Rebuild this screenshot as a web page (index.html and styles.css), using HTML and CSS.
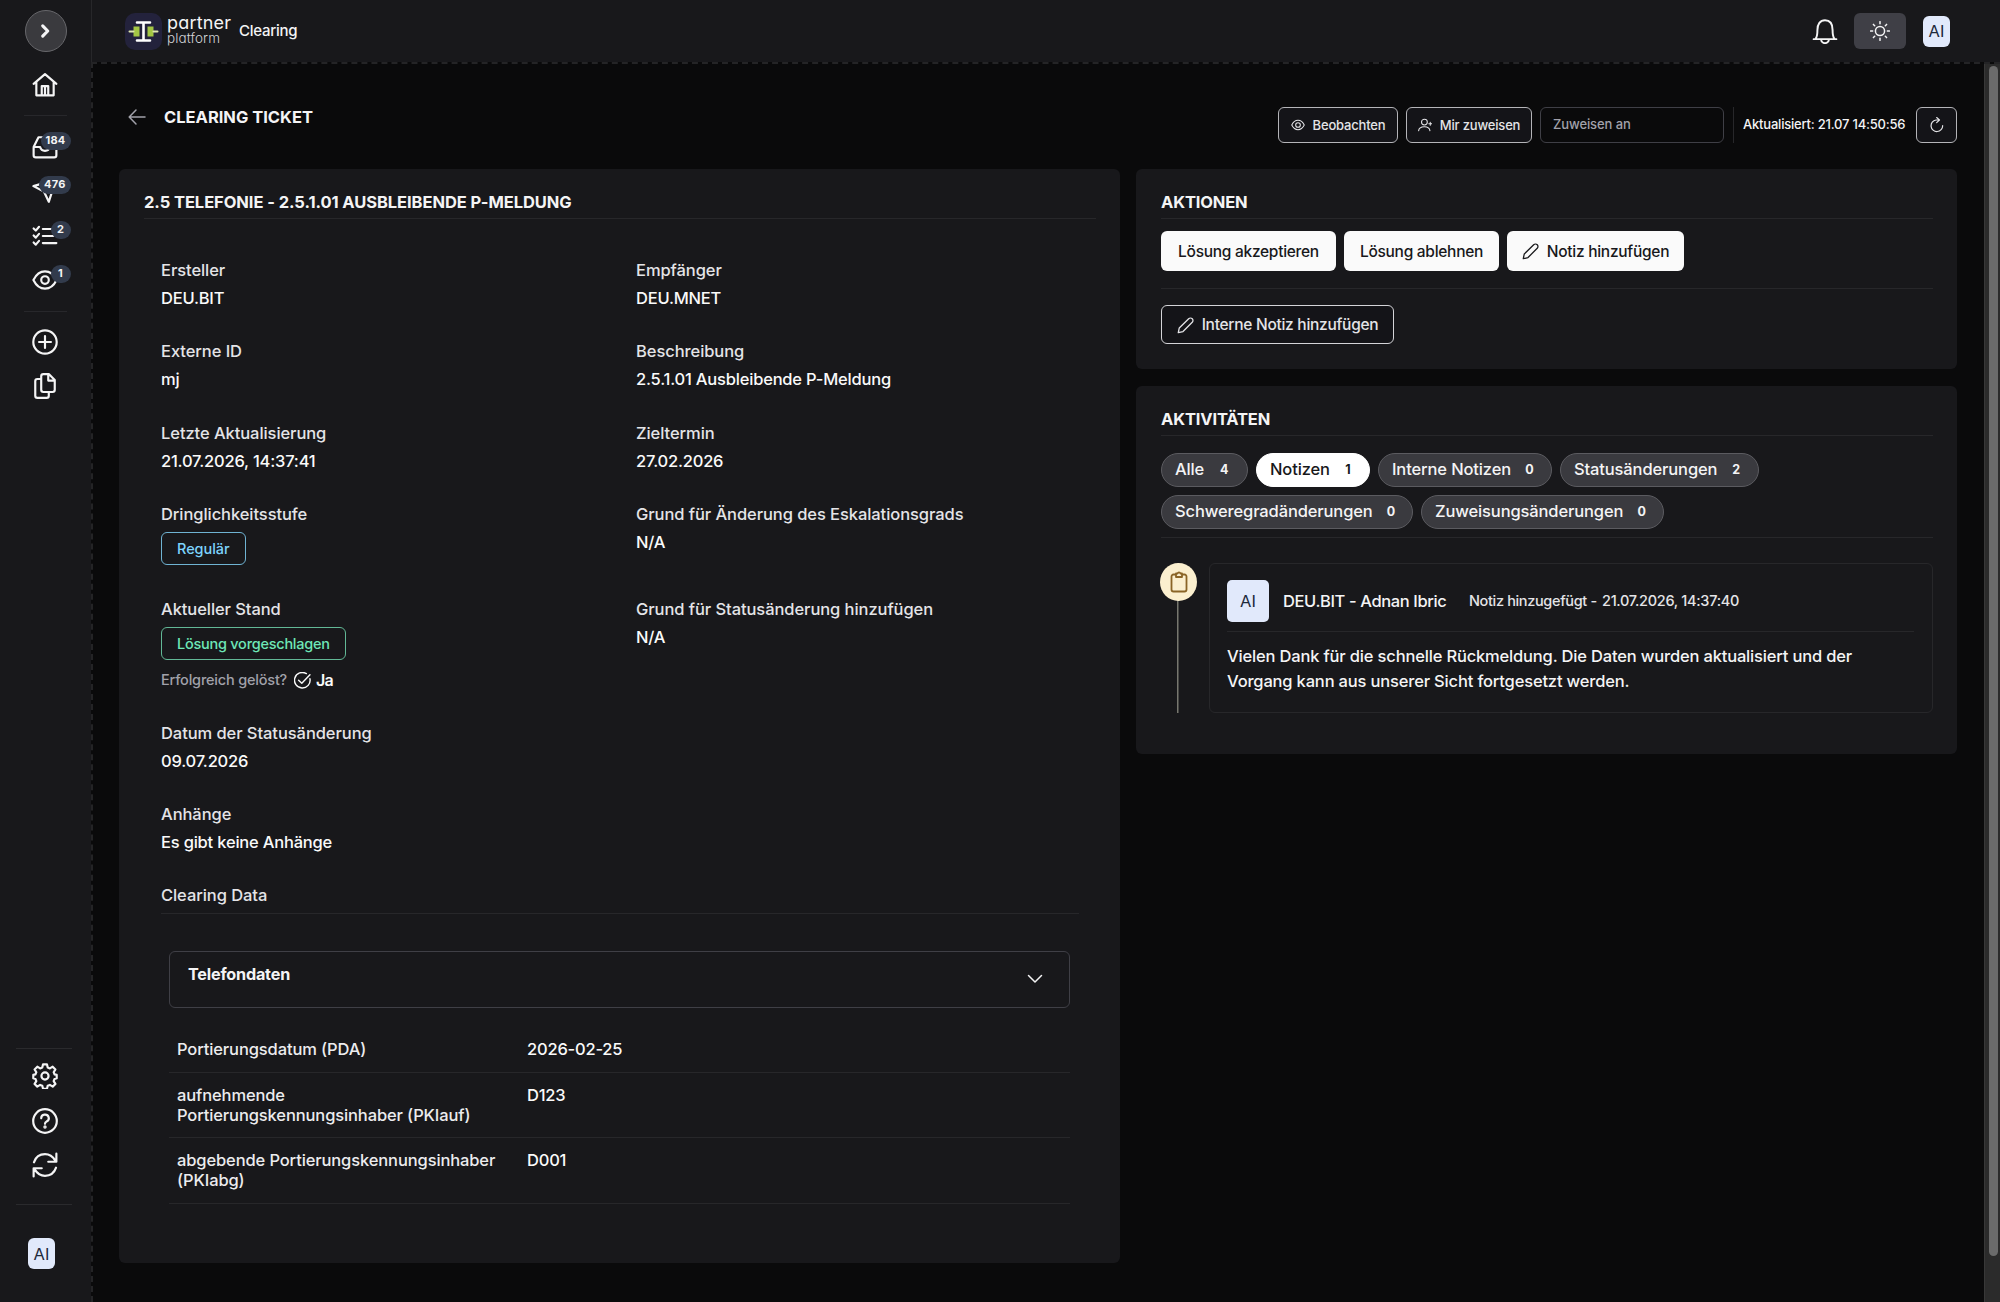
FILE: index.html
```html
<!DOCTYPE html>
<html lang="de">
<head>
<meta charset="utf-8">
<title>Clearing Ticket</title>
<link rel="stylesheet" href="styles.css">
</head>
<body>
<div class="app">
  <aside class="sidebar">
    <button class="toggle"><svg width="22" height="22" viewBox="0 0 24 24" class="heavy"><path d="M9.500 6.500 15 12l-5.500 5.500"/></svg></button>
    <nav class="nav">
      <a class="nav-item home"><svg width="26" height="26" viewBox="0 0 24 24"><path d="M1.500 11 12 2l10.500 9M4 9.500V21.500h16V9.500M9 21.500v-8.500h6v8.500M12 13v8"/></svg></a>
      <a class="nav-item"><svg width="26" height="26" viewBox="0 0 24 24"><path d="M1.500 12 6 3h12l4.500 9v7.500a2 2 0 0 1-2 2h-17a2 2 0 0 1-2-2V12h6c.5 2 2 3.500 4.500 3.500s4-1.500 4.500-3.500h6"/></svg><b class="count">184</b></a>
      <a class="nav-item"><svg width="26" height="26" viewBox="0 0 24 24"><path d="M1.300 7.500 22 1.500 15.500 22 11 12.500Z"/></svg><b class="count">476</b></a>
      <a class="nav-item"><svg width="26" height="26" viewBox="0 0 24 24"><path d="M10 5.500h12.500M10 12h12.500M10 18.500h12.500M1.500 5l2 2 3-3.500M1.500 11.500l2 2 3-3.500M1.500 18l2 2 3-3.500"/></svg><b class="count">2</b></a>
      <a class="nav-item"><svg width="26" height="26" viewBox="0 0 24 24"><path d="M1.300 12C4 6.500 7.500 4 12 4s8 2.500 10.700 8C20 17.500 16.500 20 12 20s-8-2.500-10.700-8Z"/><circle cx="12" cy="12" r="3.500"/></svg><b class="count">1</b></a>
      <a class="nav-item add"><svg width="26" height="26" viewBox="0 0 24 24"><circle cx="12" cy="12" r="10.800"/><path d="M12 6.500v11M6.500 12h11"/></svg></a>
      <a class="nav-item"><svg width="26" height="26" viewBox="0 0 24 24"><path d="M10.500 1h5l5.500 5.500v9a2 2 0 0 1-2 2h-8.500a2 2 0 0 1-2-2V3a2 2 0 0 1 2-2ZM15 1v6h6M8.500 5.500H5a2 2 0 0 0-2 2v13.500a2 2 0 0 0 2 2h8.500a2 2 0 0 0 2-2v-3"/></svg></a>
    </nav>
    <nav class="nav nav-bottom">
      <a class="nav-item"><svg width="26" height="26" viewBox="0 0 24 24"><path d="M10.200 1.200h3.600l.7 3 2 .8 2.600-1.600 2.500 2.500L20 8.500l.8 2 2 .5v3l-2 .7-.8 2 1.600 2.600-2.500 2.500-2.600-1.600-2 .8-.7 2.800h-3.600l-.7-2.800-2-.8-2.600 1.600-2.500-2.500L4 16.700l-.8-2-2-.7v-3l2-.5.8-2-1.600-2.600 2.500-2.500L7.500 5l2-.8Z"/><circle cx="12" cy="12" r="3.300"/></svg></a>
      <a class="nav-item"><svg width="26" height="26" viewBox="0 0 24 24"><circle cx="12" cy="12" r="10.900"/><path d="M8.500 9.500a3.500 3.300 0 1 1 5 2.900c-1 .5-1.500 1-1.500 2.200"/><circle class="dot" cx="12" cy="17.500" r=".6"/></svg></a>
      <a class="nav-item"><svg width="26" height="26" viewBox="0 0 24 24"><path d="M1.800 9.500C3.500 4.500 7.500 2 12 2c4 0 7 1.800 9.500 6M22.500 1.500V9H15M22.200 14.500C20.500 19.500 16.500 22 12 22c-4 0-7-1.800-9.500-6M1.500 22.500V15H9"/></svg></a>
    </nav>
    <div class="user"><span class="avatar">AI</span></div>
  </aside>

  <div class="main">
    <header class="topbar">
      <div class="brand">
        <svg class="logo" width="37" height="37" viewBox="0 0 37 37"><rect width="37" height="37" rx="10" fill="#23223c"/><path d="M8.500 13.500h6v10h-6zM22.500 13.500h6v10h-6z" fill="#a3c644"/><path d="M4.500 18.500h4M28.500 18.500h4" stroke="#dfe8b0" stroke-width="2"/><path d="M12 9.500h13M12 27.500h13M18.500 9.500v18" stroke="#fff" stroke-width="2.600"/></svg>
        <div class="wordmark"><span class="partner">partner</span><span class="platform">platform</span></div>
        <span class="section">Clearing</span>
      </div>
      <div class="tools">
        <svg class="bell" width="26" height="26" viewBox="0 0 24 24"><path d="M1.500 19.500h21M3.500 19c1.500-2.500 1.500-4.500 1.500-8 0-5.500 2.500-9 7-9s7 3.500 7 9c0 3.500 0 5.500 1.500 8M8.500 20a3.500 3.200 0 0 0 7 0"/></svg>
        <button class="theme"><svg width="20" height="20" viewBox="0 0 24 24"><circle cx="12" cy="12" r="5.500"/><path d="M12 .8v2.400M12 20.800v2.400M.8 12h2.400M20.800 12h2.400M4.100 4.100l1.500 1.500M18.400 18.400l1.500 1.500M4.100 19.900l1.500-1.500M18.400 5.600l1.500-1.500"/></svg></button>
        <span class="avatar">AI</span>
      </div>
    </header>

    <div class="body">
      <main class="page">
        <div class="toolbar">
          <svg class="back" width="18" height="18" viewBox="0 0 18 18"><path d="M17 9H1.500M8 2 1.200 9 8 16"/></svg>
          <h1>CLEARING TICKET</h1>
          <div class="controls">
            <button class="btn-sm watch"><svg width="14" height="14" viewBox="0 0 24 24"><path d="M1.300 12C4 6.500 7.500 4 12 4s8 2.500 10.700 8C20 17.500 16.500 20 12 20s-8-2.500-10.700-8Z"/><circle cx="12" cy="12" r="4"/></svg><span>Beobachten</span></button>
            <button class="btn-sm assign"><svg width="14" height="14" viewBox="0 0 24 24"><circle cx="11" cy="7" r="5"/><path d="M1 22c.5-5 4-7 10-7s9 2 9.500 7M18.500 10h5M21 7.500v5"/></svg><span>Mir zuweisen</span></button>
            <div class="input">Zuweisen an</div>
            <span class="vline"></span>
            <span class="updated">Aktualisiert: 21.07 14:50:56</span>
            <button class="btn-sm reload"><svg width="16" height="16" viewBox="0 0 24 24"><path d="M15 4.500H10.500a8.700 8.700 0 1 0 10 8.500M11.500.8l4.200 3.700-4.200 3.900"/></svg></button>
          </div>
        </div>

        <div class="columns">
          <section class="panel ticket">
            <h2 class="title">2.5 TELEFONIE - 2.5.1.01 AUSBLEIBENDE P-MELDUNG</h2>
            <div class="fields">
              <div class="field"><label>Ersteller</label><p>DEU.BIT</p></div>
              <div class="field"><label>Empfänger</label><p>DEU.MNET</p></div>
              <div class="field"><label>Externe ID</label><p>mj</p></div>
              <div class="field"><label>Beschreibung</label><p>2.5.1.01 Ausbleibende P-Meldung</p></div>
              <div class="field"><label>Letzte Aktualisierung</label><p>21.07.2026, 14:37:41</p></div>
              <div class="field"><label>Zieltermin</label><p>27.02.2026</p></div>
              <div class="field"><label>Dringlichkeitsstufe</label><span class="tag blue">Regulär</span></div>
              <div class="field"><label>Grund für Änderung des Eskalationsgrads</label><p>N/A</p></div>
              <div class="field"><label>Aktueller Stand</label><span class="tag green">Lösung vorgeschlagen</span>
                <div class="solved"><span>Erfolgreich gelöst?</span><svg width="17" height="17" viewBox="0 0 24 24"><path d="M22.500 9.500a11 11 0 1 1-5-7.200M6.500 11.500 11 16 22.500 4"/></svg><b>Ja</b></div></div>
              <div class="field"><label>Grund für Statusänderung hinzufügen</label><p>N/A</p></div>
              <div class="field wide"><label>Datum der Statusänderung</label><p>09.07.2026</p></div>
              <div class="field wide"><label>Anhänge</label><p>Es gibt keine Anhänge</p></div>
            </div>
            <div class="clearing">
              <h3>Clearing Data</h3>
              <div class="accordion"><b>Telefondaten</b><svg width="16" height="16" viewBox="0 0 16 16"><path d="M1.500 4.500 8 11l6.500-6.500"/></svg></div>
              <div class="row"><span>Portierungsdatum (PDA)</span><em>2026-02-25</em></div>
              <div class="row tall"><span>aufnehmende<br>Portierungskennungsinhaber (PKIauf)</span><em>D123</em></div>
              <div class="row tall"><span>abgebende Portierungskennungsinhaber<br>(PKIabg)</span><em>D001</em></div>
            </div>
          </section>

          <div class="side">
            <section class="panel actions">
              <h2>AKTIONEN</h2>
              <div class="buttons">
                <button class="btn w1">Lösung akzeptieren</button>
                <button class="btn w2">Lösung ablehnen</button>
                <button class="btn w3"><svg width="17" height="17" viewBox="0 0 24 24"><path d="M1.800 22.200 3.200 15.500 16.500 2.500a3.300 3.300 0 0 1 5 5L8.500 20.500Z"/></svg>Notiz hinzufügen</button>
              </div>
              <button class="btn outline"><svg width="17" height="17" viewBox="0 0 24 24"><path d="M1.800 22.200 3.200 15.500 16.500 2.500a3.300 3.300 0 0 1 5 5L8.500 20.500Z"/></svg>Interne Notiz hinzufügen</button>
            </section>

            <section class="panel activities">
              <h2>AKTIVITÄTEN</h2>
              <div class="chips">
                <span class="chip c1">Alle<b>4</b></span>
                <span class="chip c2 active">Notizen<b>1</b></span>
                <span class="chip c3">Interne Notizen<b>0</b></span>
                <span class="chip c4">Statusänderungen<b>2</b></span>
                <span class="chip c5">Schweregradänderungen<b>0</b></span>
                <span class="chip c6">Zuweisungsänderungen<b>0</b></span>
              </div>
              <div class="timeline">
                <div class="rail"><span class="marker"><svg width="20" height="22" viewBox="0 0 20 22"><path d="M6.500 3.500H4.500a2 2 0 0 0-2 2v13a2 2 0 0 0 2 2h11a2 2 0 0 0 2-2v-13a2 2 0 0 0-2-2h-2M7 2.500h1.500a1.600 1.600 0 0 1 3 0H13v3.500H7Z"/></svg></span></div>
                <article class="note">
                  <header><span class="avatar big">AI</span><b class="author">DEU.BIT - Adnan Ibric</b><span class="what">Notiz hinzugefügt -</span><time>21.07.2026, 14:37:40</time></header>
                  <p>Vielen Dank für die schnelle Rückmeldung. Die Daten wurden aktualisiert und der<br>Vorgang kann aus unserer Sicht fortgesetzt werden.</p>
                </article>
              </div>
            </section>
          </div>
        </div>
      </main>
      <div class="scrollbar"><span></span></div>
    </div>
  </div>
</div>
</body>
</html>
```

FILE: styles.css
```css
* { box-sizing: border-box; }
body { margin: 0; background: #0a0a0b; color: #f4f4f5; font: 450 16.5px/28px Inter, "Liberation Sans", sans-serif; }
h1, h2, h3, p { margin: 0; font-weight: inherit; font-size: inherit; }
button { font: inherit; color: inherit; padding: 0; border: 0; background: none; display: flex; align-items: center; }
svg { fill: none; stroke: currentColor; stroke-width: 1.8; stroke-linecap: round; stroke-linejoin: round; flex: none; display: block; }
.app { display: flex; width: 2000px; height: 1302px; overflow: hidden; white-space: nowrap; }

/* Sidebar */
.sidebar { width: 91px; background: #18181b; display: flex; flex-direction: column; padding: 10px 0 0; flex: none; }
.sidebar svg { stroke-width: 2; }
.toggle { width: 42px; height: 42px; margin-left: 25px; border-radius: 50%; background: #3a3a3e; border: 1px solid #67676b; justify-content: center; padding-right: 2px; }
.sidebar .heavy { stroke-width: 3.4; }
.nav { display: flex; flex-direction: column; margin: 11px 0 0; }
.nav-item { height: 44.3px; width: 43px; margin-left: 23.5px; display: flex; align-items: center; justify-content: center; position: relative; }
.home { height: 53px; border-bottom: 1px solid #27272b; align-items: flex-start; padding-top: 9px; margin-bottom: 9px; }
.add { border-top: 1px solid #27272b; height: 61px; margin-top: 9px; margin-bottom: -8px; }
.count { position: absolute; right: -4px; top: 7px; min-width: 20px; height: 18px; padding: 0 5px; border-radius: 9px; background: #323b4c; font-size: 11px; line-height: 17px; font-weight: 700; text-align: center; letter-spacing: .2px; }
.nav-bottom { margin: auto 16px 0; border-top: 1px solid #2a2a2d; border-bottom: 1px solid #2a2a2d; padding: 5px 0 17px; width: 56px; }
.nav-bottom .nav-item { margin-left: 7.5px; }
.dot { fill: currentColor; }
.user { height: 97px; padding: 33px 0 0 28px; }
.avatar { display: flex; align-items: center; justify-content: center; width: 27px; height: 31px; border-radius: 6px; background: #e1e9fb; color: #1e293b; font-size: 16.5px; font-weight: 400; }

.main { flex: 1; display: flex; flex-direction: column; min-width: 0; }
.topbar { height: 62px; border-left: 1px solid #27272a; background: #18181b; display: flex; align-items: center; justify-content: space-between; padding: 0 50px 0 33px; flex: none; }
.brand, .tools { display: flex; align-items: center; }
.logo { stroke: none; }
.wordmark { display: flex; flex-direction: column; width: 77px; padding-left: 5px; font-feature-settings: "cv11"; }
.partner { font-size: 18px; line-height: 17px; letter-spacing: .2px; font-weight: 400; margin-top: -3px; }
.platform { font-size: 13.5px; line-height: 14px; font-weight: 300; color: #d4d4d8; letter-spacing: .1px; }
.section { font-size: 15px; letter-spacing: -.25px; font-weight: 500; }
.theme { width: 52px; height: 36px; margin: 0 17px 0 16px; border-radius: 6px; background: #3f3f46; justify-content: center; }

.body { flex: 1; display: flex; min-height: 0; border-top: 2px dashed #242426; border-left: 2px dashed #242426; }
.scrollbar { width: 16px; margin-top: 0; background: #2b2b2b; padding: 2px 3px 0 4px; border-left: 1px solid #383838; }
.scrollbar span { display: block; height: 1190px; width: 9px; border-radius: 5px; background: #6b6b6b; }
.page { flex: 1; padding: 43px 27px 0 26px; }
.toolbar { height: 36px; display: flex; align-items: center; padding-left: 9px; }
.back { stroke-width: 1.5; color: #a1a1aa; margin-top: -17px; }
h1, h2 { font-weight: 700; font-size: 16.5px; }
h1 { margin: -16px 0 0 18px; }
.controls { margin-left: auto; display: flex; font-size: 13px; letter-spacing: -.1px; }
.btn-sm { height: 36px; border: 1.5px solid #b4b4b8; border-radius: 6px; background: #141418; color: #e4e4e7; justify-content: center; gap: 8px; font-weight: 500; line-height: 33px; letter-spacing: -.18px; }
.watch { width: 120px; margin-right: 8px; }
.assign { width: 126px; margin-right: 8px; }
.input { width: 184px; height: 36px; border: 1px solid #3f3f46; border-radius: 6px; line-height: 33px; padding-left: 12px; color: #a1a1aa; }
.vline { width: 1px; height: 36px; background: #27272a; margin: 0 9px 0 9px; }
.updated { width: 173px; line-height: 35px; letter-spacing: -.21px; }
.reload { width: 41px; }

.columns { display: flex; align-items: flex-start; gap: 16px; margin-top: 26px; }
.panel { background: #18181b; border-radius: 6px; padding: 19px 24px 0 25px; }
.panel h2 { height: 31px; line-height: 29px; border-bottom: 1px solid #27272a; letter-spacing: -.15px; }
.panel .title { letter-spacing: -.07px; }
.ticket { width: 1001px; height: 1094px; }
.fields { display: grid; grid-template-columns: 475px 1fr; grid-template-rows: 81.3px 81.4px 81.3px 95px 124px 81.3px 81.3px; margin: 37px 17px 0; }
.field label, h3 { display: block; color: #e4e4e7; letter-spacing: -.07px; }
.field p { color: #fafafa; letter-spacing: -.2px; }
.wide { grid-column: 1 / -1; }
.tag { display: flex; width: max-content; height: 33px; margin-top: 4.500px; padding: 0 15px; align-items: center; border: 1.5px solid; border-radius: 6px; font-size: 14.500px; letter-spacing: -.05px; }
.blue { color: #7dd3fc; border-color: #6fb3d3; }
.green { color: #6ee7b7; border-color: #62b896; letter-spacing: -.25px; }
.solved { display: flex; align-items: center; margin-top: 6px; font-size: 14.500px; color: #a1a1aa; letter-spacing: -.2px; }
.solved svg { margin: 0 5px 0 7px; color: #fafafa; stroke-width: 2; }
.solved b { color: #fafafa; font-size: 16px; font-weight: 600; letter-spacing: -.8px; }
.clearing { margin: -1px 17px 0; }
h3 { height: 33px; border-bottom: 1px solid #27272a; }
.accordion { display: flex; justify-content: space-between; height: 57px; margin: 37px 9px 19px 8px; padding: 8px 26px 0 18px; border: 1.5px solid #3f3f46; border-radius: 6px; font-weight: 700; letter-spacing: -.2px; font-size: 16.2px; }
.accordion b { font-weight: 700; }
.accordion svg { margin-top: 11px; stroke-width: 1.5; }
.row { display: grid; grid-template-columns: 350px 1fr; margin: 0 9px 0 8px; padding: 12px 8px; height: 46px; line-height: 20px; border-bottom: 1px solid #27272a; color: #ececee; letter-spacing: -.12px; }
.row em { font-style: normal; color: #fafafa; letter-spacing: -.2px; }
.tall { height: 65.500px; }

.side { width: 821px; display: flex; flex-direction: column; gap: 17px; }
.actions { height: 200px; }
.buttons { display: flex; gap: 8px; padding: 12px 0 17px; border-bottom: 1px solid #27272a; margin-bottom: 16px; }
.btn { height: 40px; border-radius: 6px; background: #fafafa; color: #18181b; justify-content: center; gap: 8px; font-size: 15.500px; font-weight: 500; letter-spacing: -.28px; padding-top: 1px; }
.w1 { width: 175px; } .w2 { width: 155px; } .w3 { width: 177px; }
.outline { width: 233px; height: 39px; background: #141418; color: #e4e4e7; border: 1.5px solid #d4d4d8; }
.activities { height: 368px; }
.chips { display: flex; flex-wrap: wrap; gap: 8px; padding: 17px 0 8px; border-bottom: 1px solid #27272a; letter-spacing: -.13px; }
.chip { height: 34px; padding: 0 3px 0 13px; border-radius: 17px; background: #3a3a3f; border: 1px solid #5b5b60; line-height: 31px; display: flex; }
.chip b { font-size: 12.500px; margin-left: auto; width: 40px; text-align: center; font-weight: 700; }
.c1 { width: 87px; } .c2 { width: 114px; } .c3 { width: 174px; } .c4 { width: 199px; } .c5 { width: 252px; } .c6 { width: 243px; }
.chip.active { background: #fff; color: #18181b; border-color: #fff; }
.timeline { display: flex; margin-top: 25px; height: 150px; }
.rail { width: 48px; background: linear-gradient(#77776f, #77776f) 16px 0 / 1.5px 100% no-repeat; }
.marker { display: flex; width: 37px; height: 38px; margin-left: -1px; border-radius: 50%; background: #fbefcf; color: #8a6426; align-items: center; justify-content: center; }
.note { flex: 1; border: 1px solid #27272a; border-radius: 6px; padding: 16px 18px 0 17px; }
.note header { display: flex; align-items: center; height: 52px; padding-bottom: 9px; border-bottom: 1px solid #27272a; }
.big { width: 42px; height: 42px; border-radius: 5px; }
.author { width: 186px; margin-left: 14px; font-weight: 500; letter-spacing: -.38px; }
.what { width: 133px; letter-spacing: -.35px; }
.what, time { font-size: 14.500px; color: #e4e4e7; }
time { letter-spacing: -.3px; }
.note p { line-height: 25px; padding-top: 12px; letter-spacing: -.17px; }
```
